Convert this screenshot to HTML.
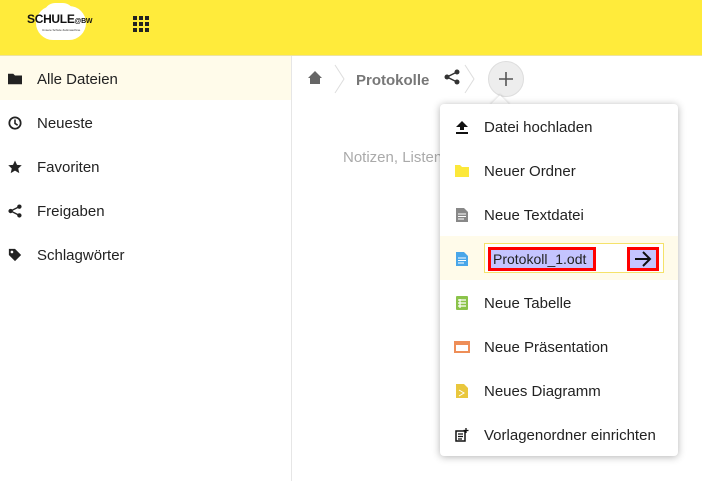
<!DOCTYPE html>
<html><head><meta charset="utf-8"><style>
*{margin:0;padding:0;box-sizing:border-box}
body{width:702px;height:481px;overflow:hidden;background:#fff;font-family:"Liberation Sans","DejaVu Sans",sans-serif;font-size:15px;color:#222;position:relative}
.hdr{position:absolute;left:0;top:0;width:702px;height:56px;background:#ffeb3b;border-bottom:1px solid #ede3a0}
.side{position:absolute;left:0;top:56px;width:292px;height:425px;border-right:1px solid #e6e6e6}
.si{height:44px;display:flex;align-items:center;padding-left:8px;padding-top:2px;color:#222}
.si.a{background:#fffbea}
.si svg{width:14px;height:14px;margin-right:15px}
.menu{position:absolute;left:440px;top:104px;width:238px;height:352px;background:#fff;border-radius:4px;box-shadow:0 1px 8px rgba(0,0,0,.3)}
.mi{height:44px;display:flex;align-items:center;padding-left:14px;padding-top:2px;color:#222}
.mi .ic{width:16px;height:16px;margin-right:14px;display:flex;align-items:center;justify-content:center}
.arr{position:absolute;left:493px;top:98px;width:14px;height:14px;background:#fff;transform:rotate(45deg);box-shadow:-1px -1px 2px rgba(0,0,0,.1)}
</style></head><body>
<div class="hdr">
 <div style="position:absolute;left:36px;top:6px;width:50px;height:34px;background:#fff;border-radius:17px"></div>
 <div style="position:absolute;left:44px;top:3px;width:30px;height:22px;background:#fff;border-radius:12px"></div>
 <div style="position:absolute;left:27px;top:12px;font-weight:bold;font-size:12px;color:#111;letter-spacing:-.3px">SCHULE<span style="font-size:7px">@BW</span></div>
 <div style="position:absolute;left:42px;top:28px;font-size:3px;color:#333">Unsere Schule Zeitmaschine</div>
 <div style="position:absolute;left:133px;top:16px;width:16px;height:16px;display:grid;grid-template-columns:4px 4px 4px;grid-template-rows:4px 4px 4px;gap:2px">
  <i style="background:#222"></i><i style="background:#222"></i><i style="background:#222"></i><i style="background:#222"></i><i style="background:#222"></i><i style="background:#222"></i><i style="background:#222"></i><i style="background:#222"></i><i style="background:#222"></i></div>
</div>
<div class="side">
 <div class="si a"><svg viewBox="0 0 16 16"><path d="M0 2h6l2 2h8v10H0z" fill="#222"/></svg>Alle Dateien</div>
 <div class="si"><svg viewBox="0 0 16 16"><circle cx="8" cy="8" r="6.5" fill="none" stroke="#222" stroke-width="2"/><path d="M8 4v4.5l3 2" fill="none" stroke="#222" stroke-width="1.8"/></svg>Neueste</div>
 <div class="si"><svg viewBox="0 0 16 16"><path d="M8 0.5l2.3 5 5.4.5-4 3.7 1.2 5.3L8 12.2 3.1 15l1.2-5.3-4-3.7 5.4-.5z" fill="#222"/></svg>Favoriten</div>
 <div class="si"><svg viewBox="0 0 16 16"><circle cx="13" cy="3" r="2.5" fill="#222"/><circle cx="3" cy="8" r="2.5" fill="#222"/><circle cx="13" cy="13" r="2.5" fill="#222"/><path d="M13 3L3 8l10 5" fill="none" stroke="#222" stroke-width="1.5"/></svg>Freigaben</div>
 <div class="si"><svg viewBox="0 0 16 16"><path d="M1 1h7l7 7-7 7-7-7z" fill="#222"/><circle cx="4.5" cy="4.5" r="1.5" fill="#fff"/></svg>Schlagwörter</div>
</div>
<svg style="position:absolute;left:307px;top:70px" width="16" height="15" viewBox="0 0 16 15"><path d="M8 1L1 8h2v6h10V8h2z" fill="#666"/></svg>
<svg style="position:absolute;left:334px;top:64px" width="12" height="30"><path d="M1 1l9 14-9 14" fill="none" stroke="#ddd"/></svg>
<div style="position:absolute;left:356px;top:72px;font-weight:bold;color:#777;font-size:15px">Protokolle</div>
<svg style="position:absolute;left:444px;top:69px" width="16" height="16" viewBox="0 0 16 16"><circle cx="13" cy="3" r="2.5" fill="#333"/><circle cx="3" cy="8" r="2.5" fill="#333"/><circle cx="13" cy="13" r="2.5" fill="#333"/><path d="M13 3L3 8l10 5" fill="none" stroke="#333" stroke-width="1.5"/></svg>
<svg style="position:absolute;left:464px;top:64px" width="12" height="30"><path d="M1 1l9 14-9 14" fill="none" stroke="#ddd"/></svg>
<div style="position:absolute;left:488px;top:61px;width:36px;height:36px;border-radius:50%;background:#ededed;border:1px solid #ddd"></div>
<svg style="position:absolute;left:499px;top:72px" width="14" height="14"><path d="M7 0v14M0 7h14" stroke="#555" stroke-width="1.6"/></svg>
<div style="position:absolute;left:343px;top:149px;color:#aaa;font-size:15px">Notizen, Listen</div>
<div class="arr"></div>
<div class="menu">
 <div class="mi"><span class="ic"><svg width="14" height="14" viewBox="0 0 14 14"><path d="M7 1L1 7h4v3h4V7h4z M1 12h12v2H1z" fill="#111"/></svg></span>Datei hochladen</div>
 <div class="mi"><span class="ic"><svg width="16" height="14" viewBox="0 0 16 14"><path d="M1 1h5l2 2h7v10H1z" fill="#fce83a"/></svg></span>Neuer Ordner</div>
 <div class="mi"><span class="ic"><svg width="12" height="14" viewBox="0 0 12 14"><path d="M0 0h8l4 4v10H0z" fill="#888"/><path d="M2 6h8M2 8.5h8M2 11h6" stroke="#fff"/></svg></span>Neue Textdatei</div>
 <div class="mi" style="background:#fffbea;position:relative"><span class="ic"><svg width="12" height="14" viewBox="0 0 12 14"><path d="M0 0h8l4 4v10H0z" fill="#49a6e9"/><path d="M2 6h8M2 8.5h8M2 11h6" stroke="#fff"/></svg></span>
  <div style="position:absolute;left:44px;top:7px;width:180px;height:30px;border:1px solid #f5e26a;background:#fff">
   <div style="position:absolute;left:3px;top:3px;width:108px;height:24px;background:#c4c4ff;border:3px solid #f00;font-size:14px;line-height:18px;padding-left:2px;color:#222">Protokoll_1.odt</div>
   <div style="position:absolute;left:142px;top:3px;width:32px;height:24px;background:#c4c4ff;border:3px solid #f00"><svg style="position:absolute;left:4px;top:1px" width="18" height="16" viewBox="0 0 18 16"><path d="M1 8h15M9 1l7 7-7 7" fill="none" stroke="#111" stroke-width="2"/></svg></div>
  </div></div>
 <div class="mi"><span class="ic"><svg width="12" height="14" viewBox="0 0 12 14"><rect width="12" height="14" rx="1" fill="#8bc34a"/><path d="M2 4h8M2 7h8M2 10h8M4 3v9" stroke="#fff" stroke-width="1.2"/></svg></span>Neue Tabelle</div>
 <div class="mi"><span class="ic"><svg width="16" height="12" viewBox="0 0 16 12"><rect x="1" y="1" width="14" height="10" fill="none" stroke="#ee8e58" stroke-width="2"/><rect x="1" y="1" width="14" height="3" fill="#ee8e58"/></svg></span>Neue Präsentation</div>
 <div class="mi"><span class="ic"><svg width="12" height="14" viewBox="0 0 12 14"><path d="M0 0h8l4 4v10H0z" fill="#e9c73d"/><path d="M3 6l5 3-5 3" stroke="#fff" fill="none"/></svg></span>Neues Diagramm</div>
 <div class="mi"><span class="ic"><svg width="14" height="14" viewBox="0 0 14 14"><path d="M1 3h9v10H1z" fill="none" stroke="#111" stroke-width="1.5"/><path d="M3 6h5M3 8.5h5M3 11h4M11 0v5M8.5 2.5h5" stroke="#111" stroke-width="1.3"/></svg></span>Vorlagenordner einrichten</div>
</div>
</body></html>
